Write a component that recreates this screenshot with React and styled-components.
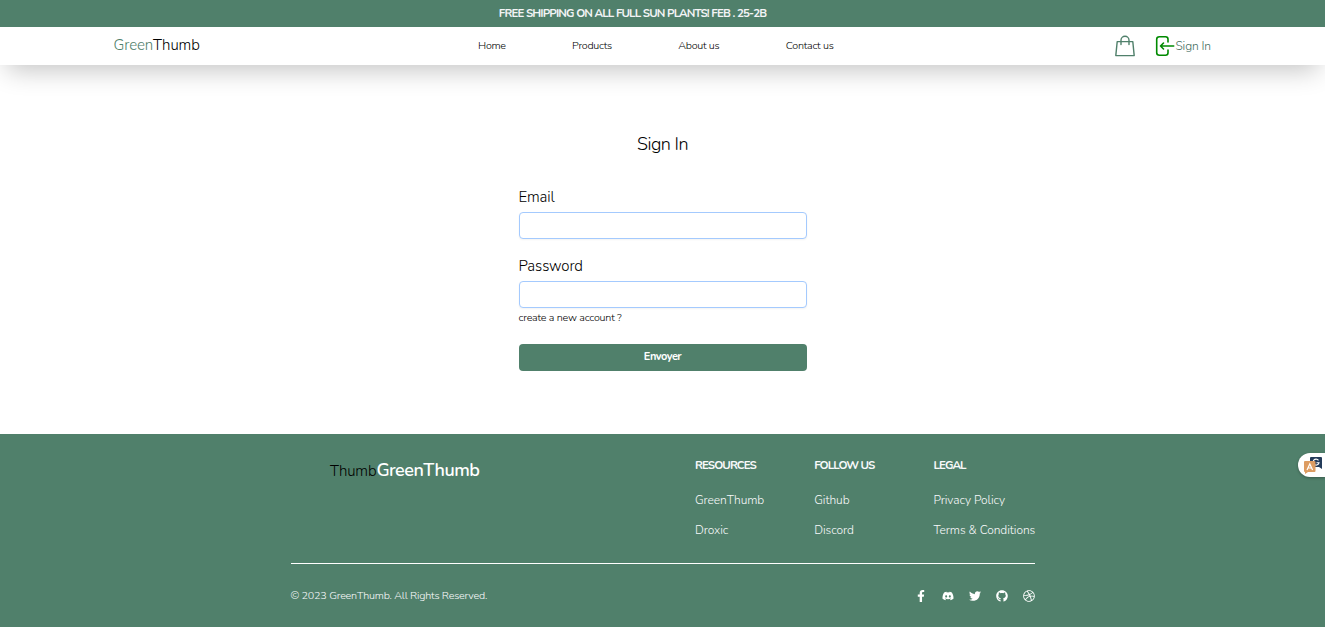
import React from "react";
import styled, { createGlobalStyle } from "styled-components";
import { FaFacebookF, FaDiscord, FaTwitter, FaGithub, FaDribbble } from "react-icons/fa";

const GlobalStyle = createGlobalStyle`
  *, *::before, *::after { box-sizing: border-box; }
  body { margin: 0; background: #fff; color: #000; overflow: hidden; font-family: Nunito, Lato, "Liberation Sans", sans-serif; font-size: 12px; font-weight: 300; }
  a { color: inherit; text-decoration: none; }
  h1, h2, p, ul { margin: 0; padding: 0; font-weight: inherit; }
  ul { list-style: none; }
  svg { display: block; flex: none; }
`;
const green = "#50806b";

const Page = styled.div`
  position: relative;
  height: 627px;
  display: flex;
  flex-direction: column;
`;
const Top = styled.div`
  flex: none;
  height: 65px;
  box-shadow: 0 12px 26px -7px rgba(0, 0, 0, 0.24);
`;
const Banner = styled.p`
  height: 27px;
  padding-right: 60px;
  background: ${green};
  color: #f3f4f6;
  text-align: center;
  font-size: 11.5px;
  line-height: 27px;
  && { font-weight: 700; }
  letter-spacing: -0.87px;
  word-spacing: 0.25px;
`;
const Header = styled.header`
  height: 38px;
  padding: 0 114px;
  display: grid;
  grid-template-columns: 364px 1fr auto;
  align-items: center;
  background: #fff;
`;
const Brand = styled.a`
  margin: -1px 0 0 -0.5px;
  font-size: 15px;
  line-height: 19px;
  letter-spacing: -0.1px;
  span { color: ${green}; }
`;
const Nav = styled.nav`
  display: flex;
  gap: 66.3px;
  font-size: 10.75px;
  letter-spacing: -0.25px;
  color: #000;
`;
const NavLink = styled.a`
  line-height: 16px;
`;
const Actions = styled.div`
  display: flex;
  align-items: center;
  gap: 20px;
`;
const SignInLink = styled.a`
  display: flex;
  align-items: center;
  color: #3f6c5c;
  font-size: 12px;
  letter-spacing: -0.1px;
`;
const Main = styled.main`
  flex: none;
  height: 369px;
  display: flex;
  flex-direction: column;
  align-items: center;
  padding-top: 66px;
`;
const Title = styled.h1`
  font-size: 18px;
  line-height: 26px;
  letter-spacing: -0.5px;
`;
const Form = styled.form`
  width: 288px;
  margin-top: 30px;
  display: flex;
  flex-direction: column;
`;
const Label = styled.label`
  font-size: 15px;
  line-height: 20px;
  letter-spacing: -0.12px;
`;
const Input = styled.input`
  height: 27px;
  margin: 5px 0 ${(p) => p.$after}px;
  padding: 0 8px;
  border: 1px solid #a4cafe;
  border-radius: 4px;
  background: #fff;
  outline: none;
  font: inherit;
  box-shadow: 0 1px 2px rgba(0, 0, 0, 0.05);
`;
const Hint = styled.a`
  padding-top: 1px;
  font-size: 10.75px;
  line-height: 18px;
  letter-spacing: -0.2px;
`;
const Submit = styled.button`
  height: 27px;
  margin-top: 17px;
  padding: 0 0 2px;
  border: 0;
  border-radius: 4px;
  background: ${green};
  color: #fff;
  font: 700 11px Nunito, Lato, "Liberation Sans", sans-serif;
  letter-spacing: -0.5px;
`;
const Footer = styled.footer`
  flex: 1;
  background: ${green};
  padding-top: 24px;
`;
const FooterInner = styled.div`
  width: 744px;
  margin-left: 290.5px;
`;
const FooterTop = styled.div`
  height: 106px;
  padding-left: 39.5px;
  display: flex;
  border-bottom: 1px solid #fff;
`;
const FooterBrand = styled.div`
  flex: none;
  width: 365px;
  font-size: 15px;
  line-height: 24px;
  letter-spacing: -0.15px;
  color: #000;
  strong { color: #fff; font-size: 18px; font-weight: 600; letter-spacing: -0.5px; }
`;
const Columns = styled.div`
  flex: none;
  display: grid;
  grid-template-columns: 119.2px 119.2px 102px;
  color: #f9fafb;
`;
const ColumnTitle = styled.h2`
  font-size: 11.5px;
  line-height: 15px;
  && { font-weight: 700; }
  letter-spacing: -0.9px;
`;
const ColumnItem = styled.li`
  margin-top: ${(p) => (p.$first ? 18 : 12)}px;
  font-size: 12px;
  line-height: 18px;
  letter-spacing: -0.06px;
  white-space: nowrap;
`;
const FooterBottom = styled.div`
  height: 63px;
  display: flex;
  align-items: center;
  justify-content: space-between;
  color: #f9fafb;
  font-size: 10.75px;
  letter-spacing: -0.19px;
`;
const Socials = styled.div`
  display: flex;
  gap: 15px;
  padding-top: 1px;
  color: #fff;
`;
const Translate = styled.div`
  position: absolute;
  right: 0;
  top: 453px;
  width: 27px;
  height: 24px;
  padding: 3px 0 0 5px;
  border-radius: 12px 0 0 12px;
  background: #fff;
  box-shadow: 0 1px 3px rgba(0, 0, 0, 0.3);
`;

const BagIcon = () => (
  <svg width="20" height="22" viewBox="0 0 20 22" fill="none" stroke={green} strokeWidth="1.4" strokeLinejoin="round" strokeLinecap="round">
    <path d="M2.2 6.6h15.600l1.400 14H.8zM6 9.500V5.200a4 4 0 0 1 8 0v4.300" />
  </svg>
);
const LoginIcon = () => (
  <svg width="20" height="22" viewBox="0 0 20 22" fill="none" stroke="#008a00" strokeWidth="1.6" strokeLinecap="round" strokeLinejoin="round">
    <path d="M13 7V4.200Q13 1.700 10.500 1.700h-6Q1.700 1.700 1.700 4.200v13.600q0 2.500 2.800 2.500h6q2.500 0 2.500-2.500V15M18.700 11H5.500M8.500 8l-3 3 3 3" />
  </svg>
);
const TranslateIcon = () => (
  <svg width="20" height="19" viewBox="0 0 20 19">
    <path d="M8 1h10q1 0 1 1v11l-3-2H8q-1 0-1-1V2q0-1 1-1z" fill="#243b5a" />
    <path d="M15.5 4.300a3 3 0 1 0 .5 2.500h-2.500" fill="none" stroke="#fff" strokeWidth="1.1" />
    <path d="M2 5h9q1.500 0 1.500 1v9q0 1-1 1H5l-3 2V16Q1 16 1 15V6q0-1 1-1z" fill="#dd9c62" />
    <path d="M4 14l2.800-6 2.800 6M5 12h3.600" fill="none" stroke="#fff" strokeWidth="1.2" />
  </svg>
);

const links = ["Home", "Products", "About us", "Contact us"];
const columns = [
  ["RESOURCES", "GreenThumb", "Droxic"],
  ["FOLLOW US", "Github", "Discord"],
  ["LEGAL", "Privacy Policy", "Terms & Conditions"],
];
const socials = [FaFacebookF, FaDiscord, FaTwitter, FaGithub, FaDribbble];

export default function App() {
  return (
    <Page>
      <GlobalStyle />
      <Top>
        <Banner>FREE SHIPPING ON ALL FULL SUN PLANTS! FEB . 25-2B</Banner>
        <Header>
          <Brand href="#"><span>Green</span>Thumb</Brand>
          <Nav>{links.map((name) => <NavLink href="#" key={name}>{name}</NavLink>)}</Nav>
          <Actions>
            <BagIcon />
            <SignInLink href="#"><LoginIcon />Sign In</SignInLink>
          </Actions>
        </Header>
      </Top>
      <Main>
        <Title>Sign In</Title>
        <Form>
          <Label htmlFor="email">Email</Label>
          <Input id="email" type="email" $after={17} />
          <Label htmlFor="password">Password</Label>
          <Input id="password" type="password" $after={0} />
          <Hint href="#">create a new account ?</Hint>
          <Submit type="button">Envoyer</Submit>
        </Form>
      </Main>
      <Footer>
        <FooterInner>
          <FooterTop>
            <FooterBrand>Thumb<strong>GreenThumb</strong></FooterBrand>
            <Columns>
              {columns.map(([title, ...items]) => (
                <div key={title}>
                  <ColumnTitle>{title}</ColumnTitle>
                  <ul>{items.map((item, i) => <ColumnItem key={item} $first={i === 0}><a href="#">{item}</a></ColumnItem>)}</ul>
                </div>
              ))}
            </Columns>
          </FooterTop>
          <FooterBottom>
            <p>© 2023 GreenThumb. All Rights Reserved.</p>
            <Socials>{socials.map((Icon, i) => <Icon key={i} size={12} />)}</Socials>
          </FooterBottom>
        </FooterInner>
      </Footer>
      <Translate><TranslateIcon /></Translate>
    </Page>
  );
}
